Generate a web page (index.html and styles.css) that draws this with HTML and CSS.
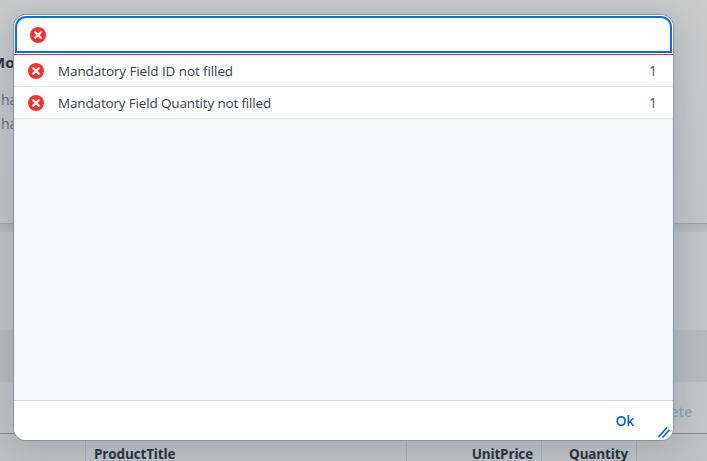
FILE: index.html
```
<!DOCTYPE html>
<html lang="en">
<head>
<meta charset="utf-8">
<title>Messages</title>
<link rel="stylesheet" href="styles.css">
</head>
<body>
<svg width="0" height="0" class="defs" aria-hidden="true">
  <symbol id="error" viewBox="0 0 16 16">
    <circle cx="8" cy="8" r="8" fill="#f53232"/>
    <path d="M5.2 5.2 10.8 10.8M10.8 5.2 5.2 10.8" stroke="#fff" stroke-width="2.1" stroke-linecap="round"/>
  </symbol>
</svg>
<main class="page">
  <header class="object-header">
    <h2 class="section-title"><span>Mo</span></h2>
    <p class="field">ha</p>
    <p class="field">ha</p>
  </header>
  <div class="divider"></div>
  <section class="spacer"></section>
  <section class="band"></section>
  <div class="toolbar"><span class="delete">ete</span></div>
  <div class="table-head">
    <div class="cell"></div>
    <div class="cell product"><span>ProductTitle</span></div>
    <div class="cell num"><span>UnitPrice</span></div>
    <div class="cell num"><span>Quantity</span></div>
    <div class="cell last"></div>
  </div>
</main>
<section class="dialog" role="dialog">
  <header class="filter">
    <div class="filter-button"><svg class="icon"><use href="#error"/></svg></div>
  </header>
  <ul class="messages">
    <li class="message"><svg class="icon"><use href="#error"/></svg><span class="text first">Mandatory Field ID not filled</span><span class="count">1</span></li>
    <li class="message"><svg class="icon"><use href="#error"/></svg><span class="text">Mandatory Field Quantity not filled</span><span class="count">1</span></li>
  </ul>
  <footer class="footer">
    <button class="ok">Ok</button>
    <svg class="resize" viewBox="0 0 12 12"><path d="M1 10.5 8.5 2M5 11 11 4.3" stroke="#0064d9" stroke-width="1.7" stroke-linecap="round" fill="none"/></svg>
  </footer>
</section>
</body>
</html>
```
FILE: styles.css
```
* { box-sizing: border-box; }
body {
  margin: 0;
  width: 707px;
  height: 461px;
  overflow: hidden;
  position: relative;
  font: 14px/16px "Open Sans", "Noto Sans", sans-serif;
  color: #1d2d3e;
  background: #c2c4c6;
}
h2, p, ul { margin: 0; padding: 0; }
.defs { position: absolute; }
.page { display: flex; flex-direction: column; height: 461px; }
.object-header {
  height: 223px;
  padding-top: 53px;
  background: linear-gradient(#cbcbcb, #c6c7c8 50%, #c3c4c6);
}
.section-title { font-size: 15px; line-height: 18px; font-weight: 700; margin-left: -9px; }
.field { margin: 21px 0 0 1px; color: #5a6b7d; }
.field + .field { margin-top: 8px; }
.divider { height: 9px; border-top: 1px solid #9da2a7; background: linear-gradient(#b1b5b9, #b9bdc0); }
.spacer { height: 98px; background: #c3c5c7; }
.band { height: 52px; background: #b7bbbe; }
.toolbar { height: 51px; background: #c4c5c6; display: flex; justify-content: flex-end; padding: 22px 15px 0 0; }
.delete { font-weight: 600; color: #83a3cb; }
.table-head {
  height: 28px;
  display: grid;
  grid-template-columns: 86px 321px 135px 95px 1fr;
  border-top: 1px solid #7f8790;
  background: #bfc1c3;
  font-size: 13.5px;
  font-weight: 700;
  letter-spacing: -.15px;
}
.cell { border-right: 1px solid #a8acb0; padding-top: 12px; }
.product { padding-left: 8px; }
.num { text-align: right; padding-right: 8px; }
.last { border: 0; }
.dialog {
  position: absolute;
  left: 14px;
  top: 15px;
  width: 659px;
  height: 425px;
  display: flex;
  flex-direction: column;
  overflow: hidden;
  border-radius: 12px;
  background: #f5f6f7;
  box-shadow: 0 0 0 1px #8796a6, 0 4px 32px 4px rgba(85, 107, 130, .28);
}
.filter { height: 40px; padding: 1px 1px 1px; background: #fff; border-bottom: 1px solid #f53232; }
.filter-button {
  height: 37px;
  border: 2px solid #0070f2;
  border-radius: 11px 11px 0 0;
  padding: 9px 0 0 13px;
}
.icon { display: block; width: 16px; height: 16px; flex: none; }
.messages { list-style: none; }
.message {
  height: 32px;
  display: flex;
  align-items: center;
  padding: 0 16px 0 14px;
  border-bottom: 1px solid #e5e5e5;
  background: #fff;
}
.text { margin-left: 14px; color: #354453; font-size: 13.5px; letter-spacing: -.16px; }
.first { letter-spacing: -.1px; }
.count { margin-left: auto; color: #16706f; }
.footer {
  height: 40px;
  margin-top: auto;
  border-top: 1px solid #d9d9d9;
  background: #fff;
  position: relative;
}
.ok {
  display: block;
  margin: 12px 39px 0 auto;
  padding: 0;
  border: 0;
  background: none;
  font: 600 14px/16px "Open Sans", sans-serif;
  letter-spacing: -.3px;
  color: #0064d9;
}
.resize { position: absolute; right: 3px; bottom: 2px; width: 12px; height: 12px; }
```
